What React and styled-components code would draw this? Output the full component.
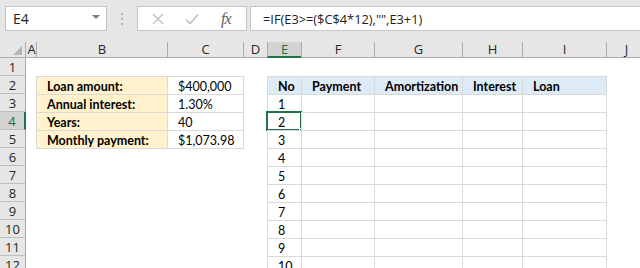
import React from "react";
import styled, { createGlobalStyle } from "styled-components";

const Global = createGlobalStyle`
  html, body { margin: 0; padding: 0; background: #ffffff; }
  body { width: 640px; height: 268px; overflow: hidden; }
`;

const UI_FONT = `"Open Sans", "Noto Sans", "Liberation Sans", sans-serif`;
const CELL_FONT = `Lato, "Liberation Sans", sans-serif`;

const Window = styled.div`
  width: 640px;
  height: 268px;
  overflow: hidden;
  background: #ffffff;
  display: flex;
  flex-direction: column;
`;

const TopBar = styled.div`
  flex-shrink: 0;
  height: 42px;
  box-sizing: border-box;
  background: #e6e6e6;
  display: flex;
  align-items: flex-start;
  padding: 6px 0 0 5px;
  font-family: ${UI_FONT};
`;

const NameBox = styled.div`
  width: 102px;
  height: 25px;
  box-sizing: border-box;
  background: #fff;
  border: 1px solid #c6c6c6;
  display: flex;
  align-items: center;
  justify-content: space-between;
  padding: 0 6px 0 7px;
  font-size: 14px;
  color: #222;
`;

const Caret = styled.span`
  width: 0;
  height: 0;
  border-left: 4px solid transparent;
  border-right: 4px solid transparent;
  border-top: 4px solid #7a7a7a;
  margin-top: -3px;
`;

const Grip = styled.div`
  width: 2px;
  height: 25px;
  margin: 0 14px 0 14px;
  display: flex;
  flex-direction: column;
  justify-content: center;
  gap: 3px;
  & > span { width: 2px; height: 2px; background: #b3b3b3; }
`;

const FxGroup = styled.div`
  width: 110px;
  height: 25px;
  box-sizing: border-box;
  background: #fff;
  border: 1px solid #c6c6c6;
  display: flex;
  align-items: center;
  padding-left: 14px;
  gap: 21px;
`;

const FxLabel = styled.span`
  font-family: "Liberation Serif", "DejaVu Serif", serif;
  font-style: italic;
  font-size: 16px;
  color: #5e5e5e;
  letter-spacing: -1px;
  margin-left: 1px;
`;

const FormulaBox = styled.div`
  flex: 1;
  height: 25px;
  margin-left: 3px;
  box-sizing: border-box;
  background: #fff;
  border: 1px solid #c6c6c6;
  border-right: none;
  display: flex;
  align-items: center;
  padding-left: 12px;
  font-size: 12.8px;
  color: #222;
  white-space: nowrap;
`;

const COLS = [
  { id: "A", w: 10 },
  { id: "B", w: 131 },
  { id: "C", w: 76 },
  { id: "D", w: 24 },
  { id: "E", w: 34 },
  { id: "F", w: 73 },
  { id: "G", w: 88 },
  { id: "H", w: 60 },
  { id: "I", w: 84 },
  { id: "J", w: 40 },
];

const Sheet = styled.div`
  flex-shrink: 0;
  display: grid;
  grid-template-columns: 26px ${COLS.map((c) => c.w + "px").join(" ")};
  grid-template-rows: 16px repeat(12, 18px);
  font-family: ${CELL_FONT};
`;

const Corner = styled.div`
  grid-column: 1;
  grid-row: 1;
  background: #e6e6e6;
  border-bottom: 1px solid #ababab;
  border-right: 1px solid #ababab;
  box-sizing: border-box;
  position: relative;
  &::after {
    content: "";
    position: absolute;
    right: 3px;
    bottom: 2px;
    width: 0;
    height: 0;
    border-left: 9px solid transparent;
    border-bottom: 9px solid #b4b4b4;
  }
`;

const ColHead = styled.div`
  grid-row: 1;
  box-sizing: border-box;
  background: ${(p) => (p.$sel ? "#d2d2d2" : "#e6e6e6")};
  border-left: 1px solid ${(p) => (p.$first ? "transparent" : "#ababab")};
  border-bottom: ${(p) => (p.$sel ? "2px solid #217346" : "1px solid #ababab")};
  display: flex;
  align-items: center;
  justify-content: center;
  font-family: ${UI_FONT};
  font-size: 13px;
  color: ${(p) => (p.$sel ? "#1d6b40" : "#262626")};
  line-height: 1;
  padding-top: ${(p) => (p.$sel ? "1px" : "0")};
`;

const RowHead = styled.div`
  grid-column: 1;
  box-sizing: border-box;
  background: ${(p) => (p.$sel ? "#d2d2d2" : "#e6e6e6")};
  border-bottom: 1px solid #bdbdbd;
  border-right: ${(p) => (p.$sel ? "2px solid #217346" : "1px solid #ababab")};
  display: flex;
  align-items: center;
  justify-content: center;
  font-family: ${UI_FONT};
  font-size: 13px;
  color: ${(p) => (p.$sel ? "#1d6b40" : "#262626")};
  padding-top: 1px;
`;

const Table = styled.div`
  display: grid;
  align-self: start;
  justify-self: start;
  border-right: 1px solid #d9d9d9;
  border-bottom: 1px solid #d9d9d9;
  position: relative;
  z-index: 1;
`;

const Cell = styled.div`
  box-sizing: border-box;
  height: 18px;
  border-left: 1px solid #d9d9d9;
  border-top: 1px solid #d9d9d9;
  background: ${(p) => p.$bg || "#ffffff"};
  padding-left: 10px;
  padding-top: 2px;
  font-size: 12.5px;
  font-weight: ${(p) => (p.$bold ? 700 : 400)};
  color: #000;
  display: flex;
  align-items: center;
  white-space: nowrap;
  position: relative;
  ${(p) =>
    p.$active &&
    `
    &::before {
      content: "";
      position: absolute;
      left: -2px;
      top: -2px;
      right: -1px;
      bottom: -1px;
      border: 2px solid #217346;
      pointer-events: none;
    }
    &::after {
      content: "";
      position: absolute;
      right: -4px;
      bottom: -4px;
      width: 6px;
      height: 6px;
      background: #217346;
      border: 1px solid #fff;
      border-right: none;
      border-bottom: none;
      box-sizing: border-box;
    }
  `}
`;

const loanRows = [
  ["Loan amount:", "$400,000"],
  ["Annual interest:", "1.30%"],
  ["Years:", "40"],
  ["Monthly payment:", "$1,073.98"],
];

const schedHead = ["No", "Payment", "Amortization", "Interest", "Loan"];
const schedWidths = [34, 73, 88, 60, 84];

function XIcon() {
  return (
    <svg width="12" height="12" viewBox="0 0 12 12">
      <path d="M1 1 L11 11 M11 1 L1 11" stroke="#bdbdbd" strokeWidth="1.3" fill="none" />
    </svg>
  );
}

function CheckIcon() {
  return (
    <svg width="14" height="12" viewBox="0 0 14 12">
      <path d="M1 6.5 L5 10.5 L13 1.5" stroke="#bdbdbd" strokeWidth="1.6" fill="none" />
    </svg>
  );
}

export default function App() {
  return (
    <>
      <Global />
      <Window>
        <TopBar>
          <NameBox>
            <span>E4</span>
            <Caret />
          </NameBox>
          <Grip>
            <span />
            <span />
            <span />
          </Grip>
          <FxGroup>
            <XIcon />
            <CheckIcon />
            <FxLabel>fx</FxLabel>
          </FxGroup>
          <FormulaBox>=IF(E3&gt;=($C$4*12),"",E3+1)</FormulaBox>
        </TopBar>
        <Sheet>
          <Corner />
          {COLS.map((c, i) => (
            <ColHead key={c.id} $first={i === 0} $sel={c.id === "E"} style={{ gridColumn: i + 2 }}>
              {c.id}
            </ColHead>
          ))}
          {Array.from({ length: 12 }, (_, i) => (
            <RowHead key={i} $sel={i === 3} style={{ gridRow: i + 2 }}>
              {i + 1}
            </RowHead>
          ))}
          <Table style={{ gridColumn: "3 / 5", gridRow: "3 / 7", gridTemplateColumns: "131px 76px" }}>
            {loanRows.map(([k, v]) => (
              <React.Fragment key={k}>
                <Cell $bold $bg="#fff2cc">{k}</Cell>
                <Cell>{v}</Cell>
              </React.Fragment>
            ))}
          </Table>
          <Table
            style={{
              gridColumn: "6 / 11",
              gridRow: "3 / 14",
              gridTemplateColumns: schedWidths.map((w) => w + "px").join(" "),
            }}
          >
            {schedHead.map((h) => (
              <Cell key={h} $bold $bg="#ddebf7">
                {h}
              </Cell>
            ))}
            {Array.from({ length: 10 }, (_, r) => (
              <React.Fragment key={r}>
                <Cell $active={r === 1}>{r + 1}</Cell>
                <Cell />
                <Cell />
                <Cell />
                <Cell />
              </React.Fragment>
            ))}
          </Table>
        </Sheet>
      </Window>
    </>
  );
}
